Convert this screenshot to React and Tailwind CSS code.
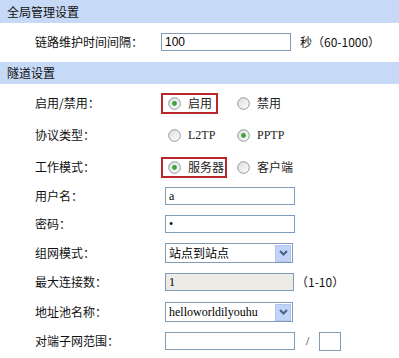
import React from "react";

const cjk = { fontFamily: '"Noto Sans CJK SC", "Liberation Sans", sans-serif' };
const serif = { fontFamily: '"Liberation Serif", "Noto Sans CJK SC", serif' };

function Radio({ checked }) {
  return (
    <svg width="13" height="13" viewBox="0 0 13 13" className="shrink-0">
      <defs>
        <linearGradient id={checked ? "rg1" : "rg0"} x1="0" y1="0" x2="1" y2="1">
          <stop offset="0" stopColor="#dcdcd6" />
          <stop offset="1" stopColor="#ffffff" />
        </linearGradient>
      </defs>
      <circle cx="6.5" cy="6.5" r="5.8" fill={`url(#${checked ? "rg1" : "rg0"})`} stroke="#8a9aa8" strokeWidth="1" />
      {checked && <circle cx="6.5" cy="6.5" r="2.4" fill="#3aa23a" />}
    </svg>
  );
}

function Option({ checked, label, boxed, mono, width }) {
  return (
    <div
      className={`flex items-center gap-[7px] h-[21px] whitespace-nowrap shrink-0 ${boxed ? "border-2 border-[#b8262b] pl-[5px]" : "pl-[7px]"}`}
      style={width ? { width } : undefined}
    >
      <Radio checked={checked} />
      <span className="text-[12px] text-[#222]" style={mono ? serif : cjk}>{label}</span>
    </div>
  );
}

function TextBox({ value, gray, w = "w-[130px]", font = serif }) {
  return (
    <div className={`${w} h-[18px] border border-[#7f9db9] ${gray ? "bg-[#ecebe6]" : "bg-white"} flex items-center px-[3px] text-[12px] text-black`} style={font}>
      {value}
    </div>
  );
}

function Select({ value, font = cjk }) {
  return (
    <div className="w-[128px] h-[20px] border border-[#7f9db9] bg-white flex items-center">
      <span className="flex-1 pl-[3px] text-[12px] text-black overflow-hidden whitespace-nowrap" style={font}>{value}</span>
      <div className="w-[16px] h-[17px] mr-[1px] bg-[#c2d3f9] border border-[#b3c5ee] flex items-center justify-center">
        <svg width="9" height="6" viewBox="0 0 9 6">
          <path d="M1 1 L4.5 4.5 L8 1" fill="none" stroke="#4d6185" strokeWidth="2" />
        </svg>
      </div>
    </div>
  );
}

function Label({ children }) {
  return <div className="w-[126px] pl-[35px] shrink-0 text-[12px] text-[#111] box-content" style={cjk}>{children}</div>;
}

export default function App() {
  return (
    <div className="w-[399px] h-[358px] bg-white overflow-hidden">
      <div className="h-[23px] bg-[#c6d9f6] flex items-center pl-[7px] text-[12px] text-[#111]" style={cjk}>全局管理设置</div>
      <div className="h-[39px] flex items-center pb-[1px]">
        <Label>链路维护时间间隔：</Label>
        <TextBox value="100" font={{ fontFamily: '"Liberation Sans", sans-serif' }} />
        <span className="ml-[9px] text-[12px] text-[#111]" style={cjk}>秒（60-1000）</span>
      </div>
      <div className="h-[22px] bg-[#c6d9f6] flex items-center pl-[7px] text-[12px] text-[#111]" style={cjk}>隧道设置</div>

      <div className="h-[35px] pt-[3px] flex items-center">
        <Label>启用/禁用：</Label>
        <Option checked label="启用" boxed width="57px" />
        <div className="ml-[12px]"><Option label="禁用" /></div>
      </div>
      <div className="h-[32px] flex items-center">
        <Label>协议类型：</Label>
        <Option label="L2TP" mono width="57px" />
        <div className="ml-[12px]"><Option checked label="PPTP" mono /></div>
      </div>
      <div className="h-[32px] flex items-center">
        <Label>工作模式：</Label>
        <Option checked label="服务器" boxed width="66px" />
        <div className="ml-[3px]"><Option label="客户端" /></div>
      </div>
      <div className="h-[26px] flex items-center">
        <Label>用户名：</Label>
        <div className="ml-[4px]"><TextBox value="a" /></div>
      </div>
      <div className="h-[30px] flex items-center">
        <Label>密码：</Label>
        <div className="ml-[4px]"><TextBox value="•" /></div>
      </div>
      <div className="h-[28px] flex items-center">
        <Label>组网模式：</Label>
        <div className="ml-[4px]"><Select value="站点到站点" /></div>
      </div>
      <div className="h-[30px] flex items-center">
        <Label>最大连接数：</Label>
        <div className="ml-[4px]"><TextBox value="1" gray w="w-[129px]" /></div>
        <span className="ml-[2px] text-[12px] text-[#111]" style={cjk}>（1-10）</span>
      </div>
      <div className="h-[30px] flex items-center">
        <Label>地址池名称：</Label>
        <div className="ml-[4px]"><Select value="helloworldilyouhu" font={serif} /></div>
      </div>
      <div className="h-[28px] flex items-center">
        <Label>对端子网范围：</Label>
        <div className="ml-[4px]"><TextBox value="" w="w-[130px]" /></div>
        <span className="ml-[11px] text-[12px] text-[#111]" style={serif}>/</span>
        <div className="ml-[10px] w-[22px] h-[19px] border border-[#7f9db9] bg-white" />
      </div>
    </div>
  );
}
